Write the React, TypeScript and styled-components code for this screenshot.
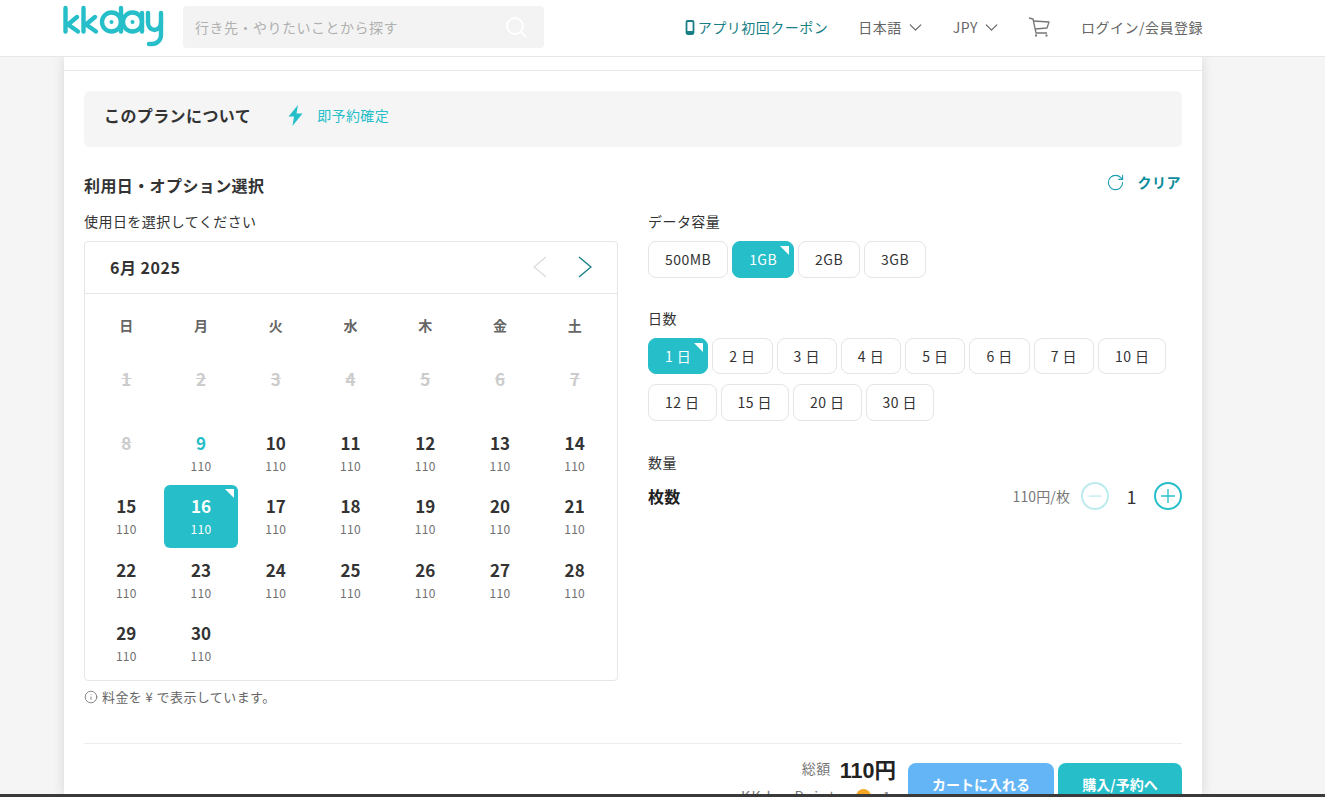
import React from "react";
import styled, { createGlobalStyle } from "styled-components";
import { ChevronDown, Info, Minus, Plus, RotateCw, Search } from "lucide-react";

const teal = "#26bec9";
const FONT = `"Noto Sans CJK JP", "Noto Sans", sans-serif`;

const GlobalStyle = createGlobalStyle`
  html, body {
    margin: 0;
    height: 100%;
    overflow: hidden;
    background: #f5f5f5;
    font-family: ${FONT};
    color: #333;
  }
  * { box-sizing: border-box; }
`;

const Header = styled.header`
  height: 57px;
  background: #fff;
  border-bottom: 1px solid #e6e6e6;
  display: flex;
  align-items: center;
  padding: 0 122px 0 63px;
  position: relative;
  z-index: 2;
`;

const Logo = styled.svg`
  width: 102px;
  height: 42px;
  margin-top: -5px;
  flex: none;
`;

const SearchBox = styled.div`
  width: 361px;
  height: 42px;
  margin: 0 0 2px 18px;
  background: #f3f3f3;
  border-radius: 4px;
  display: flex;
  align-items: center;
  justify-content: space-between;
  padding: 0 16px 1px 12px;
  font-size: 14px;
  letter-spacing: 0.5px;
  color: #b0b0b0;
`;

const Nav = styled.nav`
  margin-left: auto;
  margin-bottom: 2px;
  display: flex;
  align-items: center;
  font-size: 14px;
  color: #666;
`;

const NavItem = styled.span<{ $gap: number; $accent?: boolean }>`
  display: flex;
  align-items: center;
  margin-left: ${({ $gap }) => $gap}px;
  letter-spacing: 0.5px;
  color: ${({ $accent }) => ($accent ? "#177f85" : "#666")};
  white-space: nowrap;
`;

const PhoneIcon = styled.svg`
  width: 10px;
  height: 15px;
  margin-right: 3px;
`;

const NavChevron = styled(ChevronDown)`
  margin-left: 3px;
`;

const Card = styled.main`
  width: 1138px;
  margin-left: 64px;
  height: 740px;
  background: #fff;
  box-shadow: 0 0 12px rgba(0, 0, 0, 0.12);
  padding-top: 13px;
`;

const TopRule = styled.div`
  border-top: 1px solid #e8e8e8;
`;

const Inner = styled.div`
  padding: 20px 20px 0;
`;

const PlanBar = styled.div`
  height: 56px;
  background: #f5f5f5;
  border-radius: 6px;
  display: flex;
  align-items: center;
  padding: 0 0 8px 20px;
`;

const PlanTitle = styled.span`
  font-size: 16px;
  font-weight: 700;
  letter-spacing: 0.4px;
  color: #333;
`;

const Instant = styled.span`
  display: flex;
  align-items: center;
  margin-left: 37px;
  font-size: 14px;
  letter-spacing: 0.4px;
  color: ${teal};
  gap: 14px;
`;

const SectionHead = styled.div`
  display: flex;
  justify-content: space-between;
  margin-top: 26px;
  height: 26px;
`;

const SectionTitle = styled.h2`
  margin: 0;
  font-size: 16px;
  line-height: 24px;
  font-weight: 700;
  letter-spacing: 0.4px;
  color: #333;
`;

const ClearLink = styled.span`
  display: flex;
  align-items: center;
  height: 18px;
  gap: 13px;
  margin-right: 1px;
  font-size: 14px;
  font-weight: 700;
  letter-spacing: 0.5px;
  color: #0b8c9c;
`;

const Columns = styled.div`
  display: grid;
  grid-template-columns: 534px 534px;
  gap: 30px;
  margin-top: 13px;
`;

const FieldLabel = styled.div`
  font-size: 14px;
  line-height: 18px;
  letter-spacing: 0.45px;
  color: #333;
  margin-bottom: 11px;
`;

const CalendarBox = styled.div`
  height: 440px;
  border: 1px solid #e6e6e6;
  border-radius: 4px;
  padding: 0 5px 0 4px;
`;

const CalendarHead = styled.div`
  height: 52px;
  margin: 0 -5px 0 -4px;
  padding: 0 25px 2px 25px;
  border-bottom: 1px solid #e6e6e6;
  display: flex;
  align-items: center;
  justify-content: space-between;
`;

const Month = styled.span`
  font-size: 16px;
  font-weight: 700;
  letter-spacing: 0.5px;
  color: #333;
`;

const Arrows = styled.span`
  display: flex;
  gap: 31px;
`;

const ArrowIcon = styled.svg`
  width: 14px;
  height: 22px;
`;

const WeekGrid = styled.div`
  display: grid;
  grid-template-columns: repeat(7, 1fr);
  grid-auto-rows: 63.5px;
`;

const WeekDay = styled.div`
  display: flex;
  align-items: center;
  justify-content: center;
  padding-bottom: 2px;
  font-size: 14px;
  font-weight: 700;
  color: #666;
`;

const DayCell = styled.div<{ $selected?: boolean }>`
  position: relative;
  display: flex;
  flex-direction: column;
  align-items: center;
  padding-top: 7.5px;
  border-radius: 6px;
  background: ${({ $selected }) => ($selected ? teal : "transparent")};
`;

const DayNum = styled.span<{ $state: "off" | "today" | "on" | "selected" }>`
  font-size: 17px;
  line-height: 28px;
  font-weight: 700;
  color: ${({ $state }) =>
    $state === "off" ? "#cccccc" : $state === "today" ? teal : $state === "selected" ? "#fff" : "#333"};
  text-decoration: ${({ $state }) => ($state === "off" ? "line-through" : "none")};
`;

const DayPrice = styled.span<{ $selected?: boolean }>`
  font-size: 12px;
  line-height: 18px;
  letter-spacing: 0.3px;
  color: ${({ $selected }) => ($selected ? "#fff" : "#707070")};
`;

const CornerMark = styled.i<{ $size: number }>`
  position: absolute;
  top: 4px;
  right: 4px;
  width: 0;
  height: 0;
  border-style: solid;
  border-width: 0 ${({ $size }) => $size}px ${({ $size }) => $size}px 0;
  border-color: transparent #fff transparent transparent;
`;

const Note = styled.div`
  display: flex;
  align-items: center;
  gap: 4px;
  margin-top: 7px;
  font-size: 13px;
  line-height: 18px;
  letter-spacing: 0.42px;
  color: #666;
`;

const OptionGroup = styled.section<{ $gap: number }>`
  margin-bottom: ${({ $gap }) => $gap}px;
`;

const Options = styled.div`
  display: flex;
  flex-wrap: wrap;
  gap: 10px 4px;
  width: 534px;
`;

const Option = styled.button<{ $active?: boolean }>`
  position: relative;
  height: 36.5px;
  padding: 0 16px;
  border-radius: 8px;
  border: 1px solid ${({ $active }) => ($active ? teal : "#e4e4e9")};
  background: ${({ $active }) => ($active ? teal : "#fff")};
  color: ${({ $active }) => ($active ? "#fff" : "#333")};
  font-family: ${FONT};
  font-size: 14px;
  letter-spacing: 0.45px;
  white-space: pre;
`;

const QtyRow = styled.div`
  display: flex;
  align-items: center;
  height: 28px;
  margin-top: 3px;
`;

const QtyName = styled.span`
  font-size: 16px;
  font-weight: 700;
  color: #222;
  letter-spacing: 0.3px;
`;

const QtyPrice = styled.span`
  margin-left: auto;
  font-size: 14px;
  letter-spacing: 0.1px;
  color: #777;
`;

const RoundBtn = styled.span<{ $dim?: boolean }>`
  width: 28px;
  height: 28px;
  margin-left: ${({ $dim }) => ($dim ? 11 : 0)}px;
  border-radius: 50%;
  border: 2px solid ${teal};
  color: ${teal};
  opacity: ${({ $dim }) => ($dim ? 0.3 : 1)};
  display: flex;
  align-items: center;
  justify-content: center;
`;

const QtyValue = styled.span`
  width: 45px;
  text-align: center;
  font-size: 18px;
  color: #333;
`;

const Footer = styled.footer`
  margin-top: 37px;
  border-top: 1px solid #ececec;
  display: flex;
  justify-content: flex-end;
  padding-top: 19px;
`;

const Totals = styled.div`
  display: flex;
  flex-direction: column;
  align-items: flex-end;
  margin-right: 8px;
`;

const TotalLine = styled.div`
  display: flex;
  align-items: center;
  gap: 9px;
  height: 16px;
  margin-top: -3px;
  font-size: 14px;
  letter-spacing: 0.5px;
  color: #777;
`;

const TotalValue = styled.strong`
  font-size: 21.5px;
  font-weight: 700;
  letter-spacing: 0;
  font-family: "Liberation Sans", ${FONT};
  color: #222;
`;

const PointsLine = styled.div`
  display: flex;
  align-items: center;
  gap: 12px;
  margin-top: 10px;
  padding-right: 4px;
  font-size: 14px;
  letter-spacing: 1.4px;
  color: #777;
`;

const PointsCoin = styled.i`
  width: 15px;
  height: 15px;
  border-radius: 50%;
  background: #f5a623;
`;

const CtaButton = styled.button<{ $bg: string; $w: number }>`
  width: ${({ $w }) => $w}px;
  height: 44px;
  margin-left: 4px;
  border: 0;
  border-radius: 8px;
  background: ${({ $bg }) => $bg};
  color: #fff;
  font-family: ${FONT};
  font-size: 14px;
  font-weight: 700;
  padding: 0 0 3px;
`;

const BottomEdge = styled.div`
  position: fixed;
  left: 0;
  right: 0;
  bottom: 0;
  height: 3px;
  background: #3a3a3a;
  z-index: 5;
`;

const KKLogo = () => (
  <Logo viewBox="0 0 102 42" fill="none" stroke={teal} strokeWidth={4.4} strokeLinecap="round" strokeLinejoin="round">
    <path d="M2.5 3V26.5M14 12L5 19.5L15 26.5" />
    <path d="M20.5 3V26.5M32 12L23 19.5L33 26.5" />
    <circle cx="48.5" cy="17" r="9.5" />
    <path d="M58 3V26.5" />
    <circle cx="48.5" cy="17" r="2" fill={teal} stroke="none" />
    <circle cx="69.5" cy="17" r="9.5" />
    <path d="M79 8V26.5" />
    <circle cx="69.5" cy="17" r="2" fill={teal} stroke="none" />
    <path d="M85 8V17.5A6.5 7.5 0 0 0 98 17.5V8" />
    <path d="M98 17V30A9 9 0 0 1 89 39H86" />
  </Logo>
);

const CartIcon = () => (
  <svg width="22" height="20" viewBox="0 0 22 20" fill="none" stroke="#777" strokeWidth={1.3} strokeLinejoin="round">
    <path d="M1 1L5 2L8 16H19" />
    <path d="M5.5 4L21 5L19 11L7 12" />
    <rect x="7" y="17.5" width="2" height="2" fill="#777" stroke="none" />
    <rect x="17.5" y="17.5" width="2" height="2" fill="#777" stroke="none" />
  </svg>
);

const BoltIcon = () => (
  <svg width="15" height="21" viewBox="0 0 15 21" fill={teal}>
    <path d="M10 0L0.5 11.5H6L4.5 21L14.5 8.5H8.5Z" />
  </svg>
);

const days: number[] = [];
for (let d = 1; d <= 30; d++) days.push(d);

const dayState = (d: number): "off" | "today" | "on" | "selected" => {
  if (d <= 8) return "off";
  if (d === 9) return "today";
  if (d === 16) return "selected";
  return "on";
};

const capacity = ["500MB", "1GB", "2GB", "3GB"];
const lengths = [1, 2, 3, 4, 5, 6, 7, 10, 12, 15, 20, 30];

export default function App() {
  return (
    <>
      <GlobalStyle />
      <Header>
        <KKLogo />
        <SearchBox>
          行き先・やりたいことから探す
          <Search size={24} color="#fff" strokeWidth={2} />
        </SearchBox>
        <Nav>
          <NavItem $gap={0} $accent>
            <PhoneIcon viewBox="0 0 10 15">
              <rect x="1.5" y="1" width="7" height="13" rx="1.2" fill="none" stroke="#177f85" strokeWidth="1.8" />
              <rect x="1.5" y="11" width="7" height="3" fill="#177f85" />
            </PhoneIcon>
            アプリ初回クーポン
          </NavItem>
          <NavItem $gap={30}>
            日本語
            <NavChevron size={21} strokeWidth={1.4} />
          </NavItem>
          <NavItem $gap={27}>
            JPY
            <NavChevron size={21} strokeWidth={1.4} />
          </NavItem>
          <NavItem $gap={26}>
            <CartIcon />
          </NavItem>
          <NavItem $gap={31}>ログイン/会員登録</NavItem>
        </Nav>
      </Header>
      <Card>
        <TopRule />
        <Inner>
          <PlanBar>
            <PlanTitle>このプランについて</PlanTitle>
            <Instant>
              <BoltIcon />
              即予約確定
            </Instant>
          </PlanBar>
          <SectionHead>
            <SectionTitle>利用日・オプション選択</SectionTitle>
            <ClearLink>
              <RotateCw size={19} strokeWidth={1.4} color="#1a9db0" />
              クリア
            </ClearLink>
          </SectionHead>
          <Columns>
            <div>
              <FieldLabel>使用日を選択してください</FieldLabel>
              <CalendarBox>
                <CalendarHead>
                  <Month>6月 2025</Month>
                  <Arrows>
                    <ArrowIcon viewBox="0 0 14 22" fill="none" stroke="#dddddd" strokeWidth={1.4}>
                      <path d="M13 1L1 11L13 21" />
                    </ArrowIcon>
                    <ArrowIcon viewBox="0 0 14 22" fill="none" stroke="#177f85" strokeWidth={1.4}>
                      <path d="M1 1L13 11L1 21" />
                    </ArrowIcon>
                  </Arrows>
                </CalendarHead>
                <WeekGrid>
                  {["日", "月", "火", "水", "木", "金", "土"].map((w) => (
                    <WeekDay key={w}>{w}</WeekDay>
                  ))}
                  {days.map((d) => {
                    const state = dayState(d);
                    return (
                      <DayCell key={d} $selected={state === "selected"}>
                        <DayNum $state={state}>{d}</DayNum>
                        {state !== "off" && <DayPrice $selected={state === "selected"}>110</DayPrice>}
                        {state === "selected" && <CornerMark $size={9} />}
                      </DayCell>
                    );
                  })}
                </WeekGrid>
              </CalendarBox>
              <Note>
                <Info size={14} strokeWidth={1.3} />
                料金を ¥ で表示しています。
              </Note>
            </div>
            <div>
              <OptionGroup $gap={31}>
                <FieldLabel>データ容量</FieldLabel>
                <Options>
                  {capacity.map((c) => (
                    <Option key={c} $active={c === "1GB"}>
                      {c}
                      {c === "1GB" && <CornerMark $size={9} />}
                    </Option>
                  ))}
                </Options>
              </OptionGroup>
              <OptionGroup $gap={32}>
                <FieldLabel>日数</FieldLabel>
                <Options>
                  {lengths.map((n) => (
                    <Option key={n} $active={n === 1}>
                      {n} 日
                      {n === 1 && <CornerMark $size={9} />}
                    </Option>
                  ))}
                </Options>
              </OptionGroup>
              <FieldLabel>数量</FieldLabel>
              <QtyRow>
                <QtyName>枚数</QtyName>
                <QtyPrice>110円/枚</QtyPrice>
                <RoundBtn $dim>
                  <Minus size={20} strokeWidth={1.5} />
                </RoundBtn>
                <QtyValue>1</QtyValue>
                <RoundBtn>
                  <Plus size={22} strokeWidth={1.5} />
                </RoundBtn>
              </QtyRow>
            </div>
          </Columns>
          <Footer>
            <Totals>
              <TotalLine>
                総額
                <TotalValue>110円</TotalValue>
              </TotalLine>
              <PointsLine>
                KKday Points
                <PointsCoin />1
              </PointsLine>
            </Totals>
            <CtaButton $bg="#64b5f6" $w={146}>カートに入れる</CtaButton>
            <CtaButton $bg={teal} $w={124}>購入/予約へ</CtaButton>
          </Footer>
        </Inner>
      </Card>
      <BottomEdge />
    </>
  );
}
